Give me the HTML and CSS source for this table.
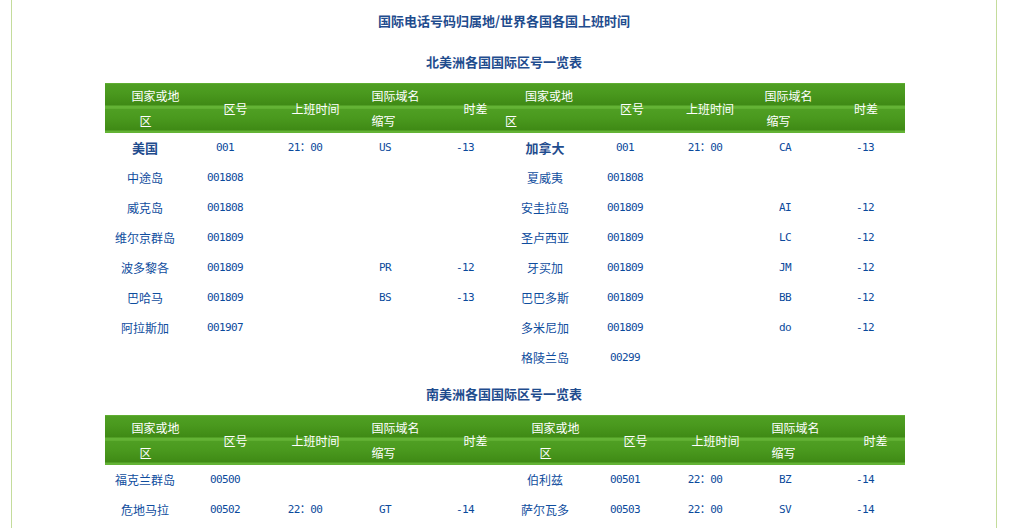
FILE: index.html
```html
<!DOCTYPE html>
<html lang="zh-CN">
<head>
<meta charset="utf-8">
<title>国际电话号码归属地/世界各国各国上班时间</title>
<link rel="stylesheet" href="styles.css">
</head>
<body>
<div class="page">
  <h1 class="title">国际电话号码归属地/世界各国各国上班时间</h1>

  <h2 class="subtitle">北美洲各国国际区号一览表</h2>
  <div class="table">
    <div class="thead">
      <div class="th"><div class="stack"><span>国家或地</span><span class="l2 in8">区</span></div></div>
      <div class="th">区号</div>
      <div class="th">上班时间</div>
      <div class="th"><div class="stack"><span>国际域名</span><span class="l2">缩写</span></div></div>
      <div class="th">时差</div>
      <div class="th p8"><div class="stack"><span>国家或地</span><span class="l2 out20">区</span></div></div>
      <div class="th p14">区号</div>
      <div class="th p10">上班时间</div>
      <div class="th p7"><div class="stack"><span>国际域名</span><span class="l2 in2">缩写</span></div></div>
      <div class="th p2">时差</div>
    </div>
    <div class="row">
      <div class="name strong">美国</div><div class="code">001</div><div class="code">21：00</div><div class="code">US</div><div class="code">-13</div>
      <div class="name strong">加拿大</div><div class="code">001</div><div class="code">21：00</div><div class="code">CA</div><div class="code">-13</div>
    </div>
    <div class="row">
      <div class="name">中途岛</div><div class="code">001808</div><div class="code"></div><div class="code"></div><div class="code"></div>
      <div class="name">夏威夷</div><div class="code">001808</div><div class="code"></div><div class="code"></div><div class="code"></div>
    </div>
    <div class="row">
      <div class="name">威克岛</div><div class="code">001808</div><div class="code"></div><div class="code"></div><div class="code"></div>
      <div class="name">安圭拉岛</div><div class="code">001809</div><div class="code"></div><div class="code">AI</div><div class="code">-12</div>
    </div>
    <div class="row">
      <div class="name">维尔京群岛</div><div class="code">001809</div><div class="code"></div><div class="code"></div><div class="code"></div>
      <div class="name">圣卢西亚</div><div class="code">001809</div><div class="code"></div><div class="code">LC</div><div class="code">-12</div>
    </div>
    <div class="row">
      <div class="name">波多黎各</div><div class="code">001809</div><div class="code"></div><div class="code">PR</div><div class="code">-12</div>
      <div class="name">牙买加</div><div class="code">001809</div><div class="code"></div><div class="code">JM</div><div class="code">-12</div>
    </div>
    <div class="row">
      <div class="name">巴哈马</div><div class="code">001809</div><div class="code"></div><div class="code">BS</div><div class="code">-13</div>
      <div class="name">巴巴多斯</div><div class="code">001809</div><div class="code"></div><div class="code">BB</div><div class="code">-12</div>
    </div>
    <div class="row">
      <div class="name">阿拉斯加</div><div class="code">001907</div><div class="code"></div><div class="code"></div><div class="code"></div>
      <div class="name">多米尼加</div><div class="code">001809</div><div class="code"></div><div class="code">do</div><div class="code">-12</div>
    </div>
    <div class="row">
      <div class="name"></div><div class="code"></div><div class="code"></div><div class="code"></div><div class="code"></div>
      <div class="name">格陵兰岛</div><div class="code">00299</div><div class="code"></div><div class="code"></div><div class="code"></div>
    </div>
  </div>

  <h2 class="subtitle">南美洲各国国际区号一览表</h2>
  <div class="table">
    <div class="thead">
      <div class="th"><div class="stack"><span>国家或地</span><span class="l2 in8">区</span></div></div>
      <div class="th">区号</div>
      <div class="th">上班时间</div>
      <div class="th"><div class="stack"><span>国际域名</span><span class="l2">缩写</span></div></div>
      <div class="th">时差</div>
      <div class="th"><div class="stack"><span>国家或地</span><span class="l2 in8">区</span></div></div>
      <div class="th">区号</div>
      <div class="th">上班时间</div>
      <div class="th"><div class="stack"><span>国际域名</span><span class="l2">缩写</span></div></div>
      <div class="th">时差</div>
    </div>
    <div class="row">
      <div class="name">福克兰群岛</div><div class="code">00500</div><div class="code"></div><div class="code"></div><div class="code"></div>
      <div class="name">伯利兹</div><div class="code">00501</div><div class="code">22：00</div><div class="code">BZ</div><div class="code">-14</div>
    </div>
    <div class="row">
      <div class="name">危地马拉</div><div class="code">00502</div><div class="code">22：00</div><div class="code">GT</div><div class="code">-14</div>
      <div class="name">萨尔瓦多</div><div class="code">00503</div><div class="code">22：00</div><div class="code">SV</div><div class="code">-14</div>
    </div>
  </div>
</div>
</body>
</html>
```

FILE: styles.css
```css
html, body {
  margin: 0;
  padding: 0;
  background: #ffffff;
}

body {
  font-family: "Noto Sans CJK SC", "Liberation Sans", sans-serif;
  font-size: 12px;
}

.page {
  margin-left: 11px;
  width: 984px;
  min-height: 528px;
  border-left: 1px solid #c4dc9c;
  border-right: 1px solid #c4dc9c;
}

.title,
.subtitle {
  margin: 0;
  font-size: 13px;
  font-weight: bold;
  color: #1f4c8e;
  text-align: center;
}

.title {
  line-height: 41px;
  height: 41px;
}

.subtitle {
  line-height: 42px;
  height: 42px;
}

.table {
  margin-left: 93px;
  width: 800px;
}

.thead {
  display: grid;
  grid-template-columns: repeat(10, 80px);
  height: 50px;
  color: #ffffff;
  background:
    linear-gradient(to bottom,
      #5fae31 0, #5fae31 1px,
      #4f9f23 1px, #4a991e 10px, #3f8a15 22px,
      #63b335 23px, #63b335 25px) 0 0 / 100% 25px repeat-y;
}

.th {
  display: flex;
  align-items: center;
  justify-content: center;
  padding-left: 21px;
  line-height: 25px;
  white-space: nowrap;
}

.th.p8 { padding-left: 8px; }
.th.p14 { padding-left: 14px; }
.th.p10 { padding-left: 10px; }
.th.p7 { padding-left: 7px; }
.th.p2 { padding-left: 2px; }

.stack {
  display: flex;
  flex-direction: column;
  width: 48px;
  text-align: left;
}

.l2.in8 { padding-left: 8px; }
.l2.in2 { padding-left: 2px; }
.l2.out20 { margin-left: -20px; }

.row {
  display: grid;
  grid-template-columns: repeat(10, 80px);
  height: 30px;
  line-height: 30px;
  text-align: center;
  color: #0f4d9e;
}

.name {
  font-size: 12px;
  white-space: nowrap;
}

.name.strong {
  font-size: 13px;
  font-weight: bold;
  color: #1f4c8e;
}

.code {
  font-family: "DejaVu Sans Mono", "Noto Sans CJK SC", monospace;
  font-size: 11px;
  letter-spacing: -0.6px;
  white-space: nowrap;
  color: #0b4a9c;
}
```
